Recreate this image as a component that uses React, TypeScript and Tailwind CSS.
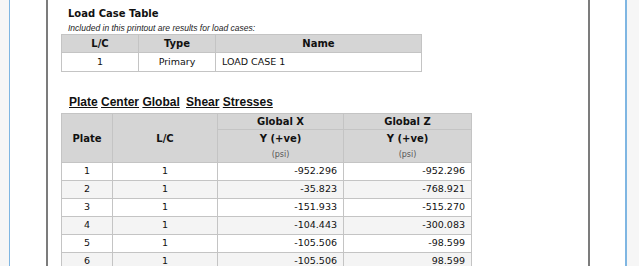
const rows = [
  { plate: "1", lc: "1", x: "-952.296", z: "-952.296" },
  { plate: "2", lc: "1", x: "-35.823", z: "-768.921" },
  { plate: "3", lc: "1", x: "-151.933", z: "-515.270" },
  { plate: "4", lc: "1", x: "-104.443", z: "-300.083" },
  { plate: "5", lc: "1", x: "-105.506", z: "-98.599" },
  { plate: "6", lc: "1", x: "-105.506", z: "98.599" },
];

const cell = "border border-[#c4c4c4] p-0";
const body = "font-['DejaVu_Sans',sans-serif] text-[9.5px] text-[#111]";
const head = "font-['DejaVu_Sans',sans-serif] text-[10px] font-bold text-[#111]";
const unit = "font-['DejaVu_Sans',sans-serif] text-[8px] font-normal leading-[15px] text-[#555]";

export default function App() {
  return (
    <div className="w-[639px] h-[266px] flex overflow-hidden bg-white">
      {/* left pane edge */}
      <div className="w-[10px] shrink-0 bg-[#f6f6f6] border-r border-[#7fb6e2]" />

      <div className="w-[36px] shrink-0" />

      {/* printed page */}
      <div className="w-[544px] shrink-0 border-x-2 border-[#7c7c7c] flex flex-col">
        <div className="pl-[20px] pt-[8px] font-['DejaVu_Sans',sans-serif] text-[10px] font-bold leading-[12px] text-[#111]">
          Load Case Table
        </div>
        <div className="pl-[20px] pt-[3px] font-['Liberation_Sans',sans-serif] text-[8.5px] italic leading-[10px] text-[#222]">
          Included in this printout are results for load cases:
        </div>

        <table className="ml-[13px] mt-px w-[360px] border-collapse table-fixed">
          <colgroup>
            <col className="w-[77px]" />
            <col className="w-[77px]" />
            <col className="w-[206px]" />
          </colgroup>
          <thead>
            <tr className="h-[18px] bg-[#d5d5d5]">
              <th className={`${cell} ${head} text-center`}>L/C</th>
              <th className={`${cell} ${head} text-center`}>Type</th>
              <th className={`${cell} ${head} text-center`}>Name</th>
            </tr>
          </thead>
          <tbody>
            <tr className="h-[19px]">
              <td className={`${cell} ${body} text-center`}>1</td>
              <td className={`${cell} ${body} text-center`}>Primary</td>
              <td className={`${cell} ${body} text-left pl-[6px]`}>LOAD CASE 1</td>
            </tr>
          </tbody>
        </table>

        <div className="pl-[21px] mt-[23px] font-['Liberation_Sans',sans-serif] text-[12px] font-bold leading-[14px] text-[#111]">
          <span className="underline">Plate</span> <span className="underline">Center</span>{" "}
          <span className="underline">Global</span>{" "}
          <span className="underline ml-[3px]">Shear</span> <span className="underline">Stresses</span>
        </div>

        <table className="ml-[13px] mt-[4px] w-[410px] border-collapse table-fixed">
          <colgroup>
            <col className="w-[51px]" />
            <col className="w-[105px]" />
            <col className="w-[126px]" />
            <col className="w-[128px]" />
          </colgroup>
          <thead className="bg-[#d5d5d5]">
            <tr className="h-[16px]">
              <th rowSpan={2} className={`${cell} ${head} text-center`}>Plate</th>
              <th rowSpan={2} className={`${cell} ${head} text-center`}>L/C</th>
              <th className={`${cell} ${head} text-center`}>Global X</th>
              <th className={`${cell} ${head} text-center`}>Global Z</th>
            </tr>
            <tr className="h-[33px]">
              <th className={`${cell} text-center`}>
                <div className={`${head} leading-[17px]`}>Y (+ve)</div>
                <div className={unit}>(psi)</div>
              </th>
              <th className={`${cell} text-center`}>
                <div className={`${head} leading-[17px]`}>Y (+ve)</div>
                <div className={unit}>(psi)</div>
              </th>
            </tr>
          </thead>
          <tbody>
            {rows.map((r, i) => (
              <tr key={r.plate} className={`h-[18px] ${i % 2 === 1 ? "bg-[#f4f4f4]" : "bg-white"}`}>
                <td className={`${cell} ${body} text-center`}>{r.plate}</td>
                <td className={`${cell} ${body} text-center`}>{r.lc}</td>
                <td className={`${cell} ${body} text-right pr-[6px]`}>{r.x}</td>
                <td className={`${cell} ${body} text-right pr-[6px]`}>{r.z}</td>
              </tr>
            ))}
          </tbody>
        </table>
      </div>

      <div className="w-[35px] shrink-0" />

      {/* right pane edge */}
      <div className="flex-1 bg-[#f6f6f6] border-l-2 border-[#7fb6e2]" />
    </div>
  );
}
